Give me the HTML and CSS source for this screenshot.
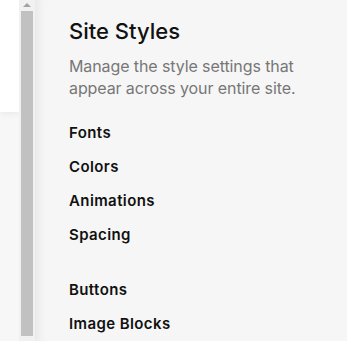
FILE: index.html
```html
<!DOCTYPE html>
<html lang="en">
<head>
  <meta charset="UTF-8">
  <meta name="viewport" content="width=device-width, initial-scale=1.0">
  <title>Site Styles</title>
  <link rel="stylesheet" href="styles.css">
</head>
<body>
  <div class="container">
    <div class="backdrop">
      <div class="card"></div>
    </div>
    <div class="scrollbar">
      <span class="arrow"></span>
      <div class="thumb"></div>
    </div>
    <div class="panel">
      <h1>Site Styles</h1>
      <p>Manage the style settings that appear across your entire site.</p>
      <ul class="group">
        <li><a href="#">Fonts</a></li>
        <li><a href="#">Colors</a></li>
        <li><a href="#">Animations</a></li>
        <li><a href="#">Spacing</a></li>
      </ul>
      <ul class="group">
        <li><a href="#">Buttons</a></li>
        <li><a href="#">Image Blocks</a></li>
      </ul>
    </div>
  </div>
</body>
</html>
```

FILE: styles.css
```css
* {
    box-sizing: border-box;
}

body {
    font-family: Inter, "Liberation Sans", sans-serif;
    margin: 0;
    padding: 0;
    overflow: hidden;
}

.container {
    display: flex;
    height: 341px;
}

.backdrop {
    width: 19px;
    background-color: #f7f7f7;
}

.card {
    height: 112px;
    background-color: #ffffff;
    box-shadow: 0 2px 6px rgba(0, 0, 0, 0.06);
}

.scrollbar {
    width: 16px;
    background-color: #f1f1f1;
    display: flex;
    flex-direction: column;
    align-items: center;
    padding: 3px 2px 5px;
}

.arrow {
    width: 0;
    height: 0;
    border-left: 4px solid transparent;
    border-right: 4px solid transparent;
    border-bottom: 4px solid #a3a3a3;
    margin-bottom: 4px;
}

.thumb {
    flex: 1;
    width: 12px;
    background-color: #c1c1c1;
}

.panel {
    flex: 1;
    background-color: #f6f6f6;
    box-shadow: inset 12px 0 12px -10px rgba(0, 0, 0, 0.08);
    padding: 18px 20px 0 34px;
}

.panel h1 {
    font-size: 22px;
    font-weight: 500;
    color: #111111;
    margin: 0 0 11px;
}

.panel p {
    font-size: 16px;
    letter-spacing: -0.1px;
    color: #777777;
    line-height: 22px;
    margin: 0 0 23px;
}

.group {
    list-style-type: none;
    padding: 0;
    margin: 0 0 21px;
}

.group li {
    height: 34px;
}

.group a {
    text-decoration: none;
    color: #111111;
    font-size: 15px;
    letter-spacing: 0.4px;
    font-weight: 600;
}
```
